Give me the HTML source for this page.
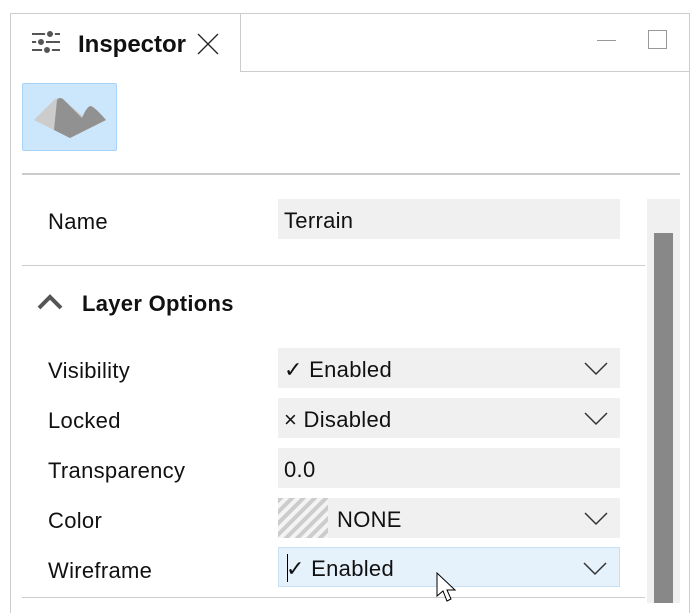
<!DOCTYPE html>
<html><head><style>
body{margin:0;width:698px;height:603px;background:#fff;position:relative;overflow:hidden;font-family:"Liberation Sans",sans-serif;color:#111}
.a{position:absolute}
.lbl{position:absolute;left:48px;font-size:22px;line-height:40px;letter-spacing:0.3px}
.fld{position:absolute;left:278px;width:342px;height:40px;background:#f0f0f0;font-size:22px;line-height:44px;box-sizing:border-box;padding-left:6px;letter-spacing:0.3px}
.chev{position:absolute;right:12px;top:14px}
</style></head><body>
<div class="a" style="left:10px;top:13px;width:680px;height:600px;border-left:1px solid #ccc;border-top:1px solid #ccc;border-right:1px solid #ccc;box-sizing:border-box"></div>
<div class="a" style="left:240px;top:13px;width:1px;height:58px;background:#ccc"></div>
<div class="a" style="left:240px;top:71px;width:450px;height:1px;background:#ccc"></div>
<svg class="a" style="left:30px;top:30px" width="32" height="26"><g stroke="#555" stroke-width="2"><line x1="2" y1="4" x2="30" y2="4"/><line x1="2" y1="12" x2="30" y2="12"/><line x1="2" y1="20" x2="30" y2="20"/></g><g fill="#555" stroke="#fff" stroke-width="2"><circle cx="20" cy="4" r="4"/><circle cx="11" cy="12" r="4"/><circle cx="17" cy="20" r="4"/></g></svg>
<div class="a" style="left:78px;top:31px;font-size:24px;font-weight:bold">Inspector</div>
<svg class="a" style="left:197px;top:33px" width="22" height="22"><path d="M1 1L21 21M21 1L1 21" stroke="#222" stroke-width="1.3"/></svg>
<div class="a" style="left:597px;top:40px;width:19px;height:1px;background:#999"></div>
<div class="a" style="left:648px;top:30px;width:17px;height:17px;border:1.5px solid #999"></div>
<div class="a" style="left:22px;top:83px;width:95px;height:68px;background:#cce6fc;border:1px solid #a8d3f8;box-sizing:border-box;border-radius:2px"></div>
<svg class="a" style="left:30px;top:94px" width="80" height="50"><path d="M4 26L24 6Q30 2 34 6L56 25Q58 17 62 12L76 26L40 44Z" fill="#ccc"/><path d="M27 6Q30 2 34 6L52 24Q56 14 60 12Q64 12 76 26L40 44L24 36Z" fill="#919191"/></svg>
<div class="a" style="left:22px;top:173px;width:658px;height:2px;background:#ccc"></div>
<div class="a" style="left:647px;top:199px;width:33px;height:404px;background:#f0f0f0"></div>
<div class="a" style="left:654px;top:233px;width:19px;height:370px;background:#888"></div>
<div class="lbl" style="top:202px">Name</div>
<div class="fld" style="top:199px">Terrain</div>
<div class="a" style="left:22px;top:265px;width:623px;height:1px;background:#ccc"></div>
<svg class="a" style="left:36px;top:293px" width="28" height="18"><path d="M3 15L14 4L25 15" fill="none" stroke="#555" stroke-width="4"/></svg>
<div class="a" style="left:82px;top:291px;font-size:22px;font-weight:bold;letter-spacing:0.3px">Layer Options</div>
<div class="lbl" style="top:351px">Visibility</div>
<div class="fld" style="top:348px">✓ Enabled<svg class="chev" width="24" height="14"><path d="M1 1L12 12L23 1" fill="none" stroke="#333" stroke-width="1.5"/></svg></div>
<div class="lbl" style="top:401px">Locked</div>
<div class="fld" style="top:398px">× Disabled<svg class="chev" width="24" height="14"><path d="M1 1L12 12L23 1" fill="none" stroke="#333" stroke-width="1.5"/></svg></div>
<div class="lbl" style="top:451px">Transparency</div>
<div class="fld" style="top:448px">0.0</div>
<div class="lbl" style="top:501px">Color</div>
<div class="fld" style="top:498px;padding-left:59px">NONE<svg class="chev" width="24" height="14"><path d="M1 1L12 12L23 1" fill="none" stroke="#333" stroke-width="1.5"/></svg>
<svg class="a" style="left:0;top:0" width="50" height="40"><defs><pattern id="p" width="8" height="8" patternUnits="userSpaceOnUse" patternTransform="rotate(45)"><rect width="4" height="8" fill="#ccc"/><rect x="4" width="4" height="8" fill="#f4f4f4"/></pattern></defs><rect width="50" height="40" fill="url(#p)"/></svg></div>
<div class="lbl" style="top:551px">Wireframe</div>
<div class="fld" style="top:547px;background:#e5f1fb;border:1px solid #c6e0f5;padding-left:7px;line-height:42px">✓ Enabled<svg class="chev" width="24" height="14"><path d="M1 1L12 12L23 1" fill="none" stroke="#333" stroke-width="1.5"/></svg><div class="a" style="left:8px;top:6px;width:1px;height:28px;background:#000"></div></div>
<div class="a" style="left:22px;top:597px;width:623px;height:1px;background:#ccc"></div>
<svg class="a" style="left:436px;top:572px" width="26" height="31"><path d="M1 1L1 24L7 19L11 29L15 27L11 18L19 18Z" fill="#fff" stroke="#000" stroke-width="1"/></svg>
</body></html>
